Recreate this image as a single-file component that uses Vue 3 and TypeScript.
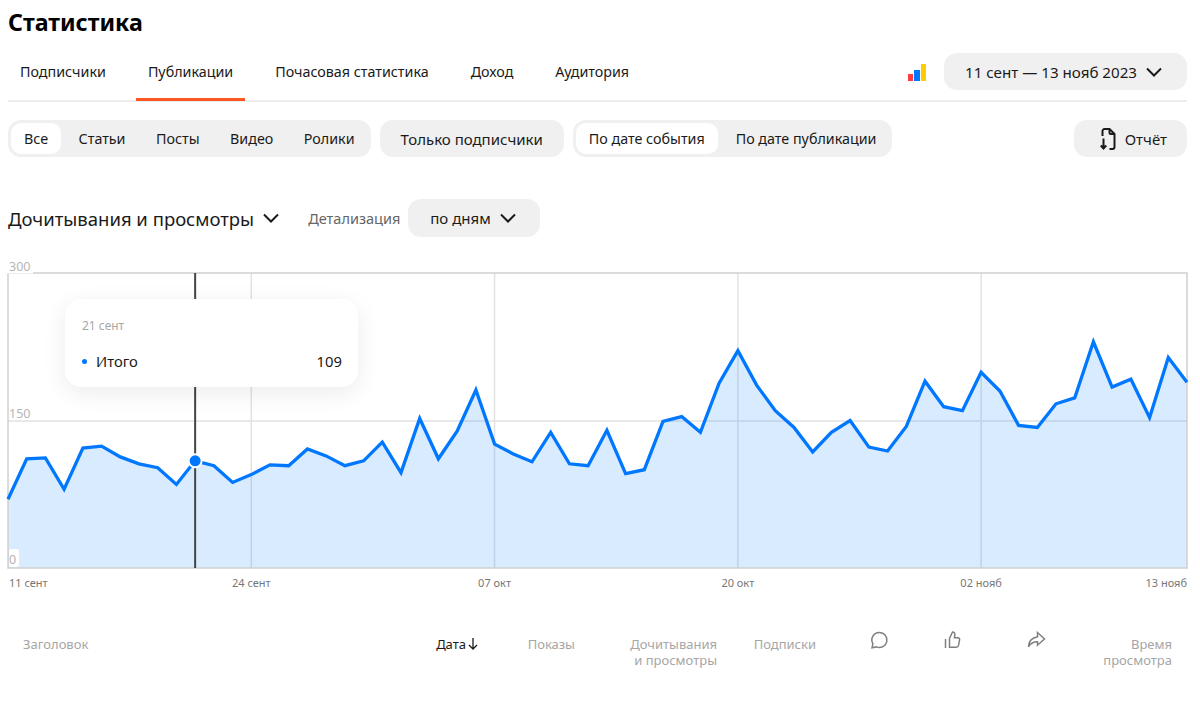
<script setup lang="ts">
const tabs = ["Подписчики", "Публикации", "Почасовая статистика", "Доход", "Аудитория"];
const types = ["Все", "Статьи", "Посты", "Видео", "Ролики"];
const dates = ["По дате события", "По дате публикации"];

// значения по дням, 11 сент - 13 нояб
const values = [
  70, 111, 112, 80, 122, 124, 113, 106, 102, 85, 109, 104, 87, 95, 105, 104,
  121, 114, 104, 109, 128, 97, 152, 111, 139, 181, 126, 116, 108, 138, 106,
  104, 140, 96, 100, 149, 154, 138, 188, 221, 186, 160, 143, 118, 138, 150,
  123, 119, 144, 190, 164, 160, 199, 180, 145, 143, 167, 173, 230, 184, 192,
  153, 214, 189,
];

const left = 8;
const right = 1187;
const top = 15;
const bottom = 310;
const stepX = (right - left) / (values.length - 1);

const xAt = (i: number) => left + i * stepX;
const yAt = (v: number) => bottom - (v / 300) * (bottom - top);

const linePoints = values.map((v, i) => `${xAt(i).toFixed(1)},${yAt(v).toFixed(1)}`).join(" ");
const areaPoints = `${left},${bottom} ${linePoints} ${right},${bottom}`;

const gridX = [13, 26, 39, 52].map(xAt);
const ticks = [
  { label: "24 сент", x: xAt(13) },
  { label: "07 окт", x: xAt(26) },
  { label: "20 окт", x: xAt(39) },
  { label: "02 нояб", x: xAt(52) },
];

const activeX = xAt(10);
const activeY = yAt(values[10]);
</script>

<template>
  <div class="page">
    <h1 class="title">Статистика</h1>

    <div class="tabs-row">
      <nav class="tabs">
        <a v-for="tab in tabs" :key="tab" :class="['tab', { active: tab === 'Публикации' }]">{{ tab }}</a>
      </nav>
      <svg class="bars" width="18" height="17" viewBox="0 0 18 17">
        <rect x="0" y="10" width="5" height="7" fill="#ff3b3b" />
        <rect x="6" y="6" width="6" height="11" fill="#0077ff" />
        <rect x="13" y="0" width="5" height="17" fill="#ffcc00" />
      </svg>
      <button class="pill date-pill">
        11 сент — 13 нояб 2023
        <svg class="chevron" width="18" height="10" viewBox="0 0 18 10"><path d="M2 1.500l7 7 7-7" /></svg>
      </button>
    </div>

    <div class="filters">
      <div class="group">
        <button v-for="t in types" :key="t" :class="['seg', { on: t === 'Все' }]">{{ t }}</button>
      </div>
      <button class="pill only-subs">Только подписчики</button>
      <div class="group wide">
        <button v-for="d in dates" :key="d" :class="['seg', { on: d === 'По дате события' }]">{{ d }}</button>
      </div>
      <button class="pill report">
        <svg width="16" height="24" viewBox="0 0 16 24" class="doc">
          <path d="M2.500 9V4a2 2 0 0 1 2-2h5l5 5v13a2 2 0 0 1-2 2h-3" />
          <path d="M9.500 2v3.500a1.500 1.500 0 0 0 1.500 1.500h3.500" />
          <path d="M3.500 11.500v10M0.800 18.500l2.700 3 2.700-3" />
        </svg>
        Отчёт
      </button>
    </div>

    <div class="metric-row">
      <span class="metric">Дочитывания и просмотры</span>
      <svg class="chevron metric-chevron" width="18" height="10" viewBox="0 0 18 10"><path d="M2 1.500l7 7 7-7" /></svg>
      <span class="detail">Детализация</span>
      <button class="pill days">
        по дням
        <svg class="chevron" width="18" height="10" viewBox="0 0 18 10"><path d="M2 1.500l7 7 7-7" /></svg>
      </button>
    </div>

    <div class="chart">
      <svg width="1200" height="340" viewBox="0 0 1200 340">
        <line v-for="x in gridX" :key="x" :x1="x" :x2="x" :y1="top" :y2="bottom" class="grid" />
        <line :x1="left" :x2="right" y1="163" y2="163" class="grid" />
        <polygon :points="areaPoints" class="area" />
        <rect :x="left" :y="top" :width="right - left" :height="bottom - top" class="frame" />
        <line :x1="activeX" :x2="activeX" :y1="top" :y2="bottom" class="cursor" />
        <polyline :points="linePoints" class="line" />
        <circle :cx="activeX" :cy="activeY" r="6.500" class="dot" />

        <rect x="7" y="0" width="26" height="15.500" fill="#fff" />
        <rect x="9" y="291" width="10" height="18" rx="2" fill="#fff" />
        <text x="9" y="13" class="y-label">300</text>
        <text x="9" y="160" class="y-label">150</text>
        <text x="9" y="306" class="y-label">0</text>

        <text x="9" y="329" class="x-label">11 сент</text>
        <text v-for="t in ticks" :key="t.label" :x="t.x" y="329" text-anchor="middle" class="x-label">{{ t.label }}</text>
        <text :x="right" y="329" text-anchor="end" class="x-label">13 нояб</text>
      </svg>

      <div class="tooltip">
        <div class="tip-date">21 сент</div>
        <div class="tip-row">
          <i class="tip-dot"></i>
          <span>Итого</span>
          <span class="tip-value">109</span>
        </div>
      </div>
    </div>

    <div class="table-head">
      <div class="col first">Заголовок</div>
      <div class="col sorted">Дата<svg width="10" height="13" viewBox="0 0 10 13" class="arrow"><path d="M5 1v11M1 8l4 4 4-4" /></svg></div>
      <div class="col">Показы</div>
      <div class="col">Дочитывания<br />и просмотры</div>
      <div class="col">Подписки</div>
      <div class="col icon">
        <svg width="20" height="20" viewBox="0 0 20 20"><path d="M10.500 2.500a7.500 7.500 0 1 1-3 14.400l-4.500.900.900-4a7.500 7.500 0 0 1 6.600-11.300z" /></svg>
      </div>
      <div class="col icon">
        <svg width="20" height="20" viewBox="0 0 20 20"><path d="M7.500 8.500l3-6.500c1.600 0 2.700 1.100 2.400 2.700l-.5 3h3.600a1.600 1.600 0 0 1 1.600 1.900l-1.100 5.800a2.300 2.300 0 0 1-2.300 1.800H7.500zM3.500 9v9" /></svg>
      </div>
      <div class="col icon">
        <svg width="20" height="20" viewBox="0 0 20 20"><path d="M11.500 2.500l7 6.500-7 6.200v-3.400c-3.800 0-6.800 1.300-9 5 .3-5.500 3.700-9 9-10z" /></svg>
      </div>
      <div class="col">Время<br />просмотра</div>
    </div>
  </div>
</template>

<style>
body {
  margin: 0;
  background: #fff;
  font-family: "Noto Sans", "Open Sans", sans-serif;
}
</style>

<style scoped>
.page {
  width: 1200px;
  height: 705px;
  overflow: hidden;
  color: #1a1a1a;
}

.title {
  margin: 0;
  padding-left: 8px;
  font-size: 23.200px;
  line-height: 44px;
  font-weight: 700;
  color: #000;
}

.tabs-row {
  display: flex;
  align-items: flex-start;
  margin: 9px 13px 0 8px;
  height: 47px;
  border-bottom: 2px solid #ededed;
}

.tabs {
  display: flex;
  gap: 18px;
  height: 47px;
  margin-right: auto;
}

.tab {
  padding: 0 12px;
  height: 45px;
  line-height: 38px;
  font-size: 14.300px;
  border-bottom: 3px solid transparent;
}

.tab.active {
  border-bottom-color: #ff5722;
}

.bars {
  margin: 11px 18px 0 0;
}

button {
  font-family: inherit;
  color: inherit;
  border: none;
  background: none;
  padding: 0;
  font-size: 14.300px;
}

.pill {
  display: flex;
  align-items: center;
  height: 37px;
  background: #f0f0f0;
  border-radius: 13px;
}

.date-pill {
  gap: 8px;
  padding: 0 24px 0 21px;
  font-size: 15.150px;
}

.chevron path {
  fill: none;
  stroke: #1a1a1a;
  stroke-width: 2;
}

.filters {
  display: flex;
  align-items: center;
  gap: 9px;
  margin: 18px 13px 0 8px;
}

.group {
  display: flex;
  gap: 4.500px;
  padding: 3px;
  height: 37px;
  box-sizing: border-box;
  background: #f0f0f0;
  border-radius: 13px;
}

.group.wide {
  gap: 5px;
}

.seg {
  padding: 0 13px;
  border-radius: 10px;
}

.seg.on {
  background: #fff;
}

.only-subs {
  padding: 0 21px;
  font-size: 15px;
}

.report {
  margin-left: auto;
  padding: 0 20px 0 26px;
  gap: 9px;
  font-size: 15px;
}

.doc path {
  fill: none;
  stroke: #1a1a1a;
  stroke-width: 2;
}

.metric-row {
  display: flex;
  align-items: center;
  margin: 42px 0 0 8px;
  height: 38px;
}

.metric {
  font-size: 18.500px;
}

.metric-chevron {
  margin-left: 8px;
}

.detail {
  margin: 0 8px 0 28px;
  font-size: 14.500px;
  color: #666;
}

.days {
  height: 38px;
  padding: 0 23px 0 22px;
  gap: 8px;
  font-size: 15px;
}

.chart {
  position: relative;
  margin-top: 21px;
  height: 340px;
}

.chart svg {
  display: block;
}

.frame {
  fill: none;
  stroke: #d0d0d0;
  stroke-width: 1.500;
}

.grid {
  stroke: #e2e2e2;
  stroke-width: 1.500;
}

.area {
  fill: rgba(0, 119, 255, 0.15);
}

.cursor {
  stroke: #444;
  stroke-width: 2;
}

.line {
  fill: none;
  stroke: #0077ff;
  stroke-width: 3.300;
}

.dot {
  fill: #0077ff;
  stroke: #fff;
  stroke-width: 2;
}

.y-label {
  font-size: 12.500px;
  fill: #b5b5b5;
}

.x-label {
  font-size: 11px;
  fill: #777;
}

.tooltip {
  position: absolute;
  left: 65px;
  top: 41px;
  width: 293px;
  height: 88px;
  box-sizing: border-box;
  padding: 18px 16px 0 17px;
  background: #fff;
  border-radius: 16px;
  box-shadow: 0 6px 24px rgba(0, 0, 0, 0.08);
}

.tip-date {
  font-size: 12px;
  line-height: 18px;
  color: #a8a8a8;
}

.tip-row {
  display: flex;
  align-items: center;
  margin-top: 16px;
  font-size: 14.800px;
  line-height: 20px;
}

.tip-dot {
  width: 5px;
  height: 5px;
  margin-right: 9px;
  border-radius: 50%;
  background: #0077ff;
}

.tip-value {
  margin-left: auto;
}

.table-head {
  display: grid;
  grid-template-columns: 390px 65px 97px 142px 99px 73px 73px 84px 126px;
  margin: 38px 0 0 23px;
  font-size: 13px;
  line-height: 16px;
  color: #a6a6a6;
}

.col {
  text-align: right;
}

.first {
  text-align: left;
}

.sorted {
  color: #1a1a1a;
  display: flex;
  justify-content: flex-end;
  gap: 2px;
}

.arrow {
  margin-top: 1px;
}

.arrow path {
  fill: none;
  stroke: #1a1a1a;
  stroke-width: 1.300;
}

.icon {
  margin-top: -6px;
}

.icon svg path {
  fill: none;
  stroke: #808080;
  stroke-width: 1.500;
}
</style>
